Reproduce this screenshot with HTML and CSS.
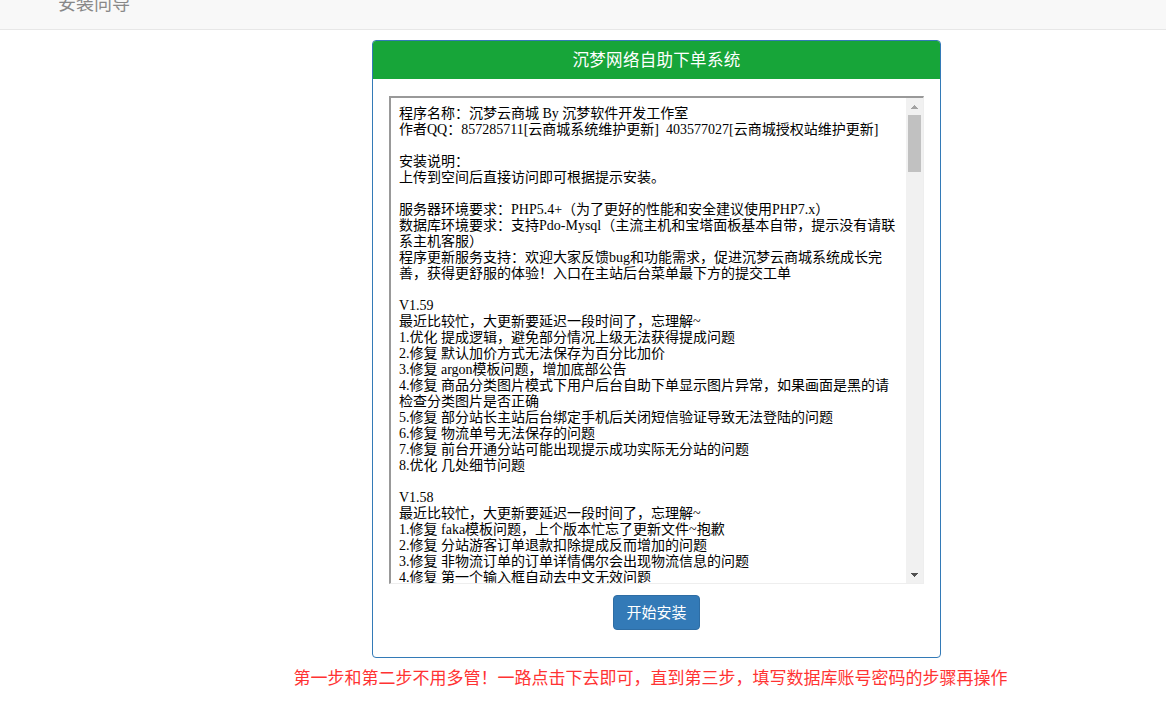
FILE: index.html
```html
<!DOCTYPE html>
<html lang="zh-CN">
<head>
<meta charset="utf-8">
<title>安装向导</title>
<link rel="stylesheet" href="styles.css">
</head>
<body>
<nav class="navbar"><span class="brand">安装向导</span></nav>
<main class="main">
  <section class="panel">
    <header class="panel-heading">沉梦网络自助下单系统</header>
    <div class="panel-body">
      <div class="textbox">
<textarea class="notes" wrap="off" readonly>程序名称：沉梦云商城 By 沉梦软件开发工作室
作者QQ：857285711[云商城系统维护更新]  403577027[云商城授权站维护更新]

安装说明：
上传到空间后直接访问即可根据提示安装。

服务器环境要求：PHP5.4+（为了更好的性能和安全建议使用PHP7.x）
数据库环境要求：支持Pdo-Mysql（主流主机和宝塔面板基本自带，提示没有请联
系主机客服）
程序更新服务支持：欢迎大家反馈bug和功能需求，促进沉梦云商城系统成长完
善，获得更舒服的体验！入口在主站后台菜单最下方的提交工单

V1.59
最近比较忙，大更新要延迟一段时间了，忘理解~
1.优化 提成逻辑，避免部分情况上级无法获得提成问题
2.修复 默认加价方式无法保存为百分比加价
3.修复 argon模板问题，增加底部公告
4.修复 商品分类图片模式下用户后台自助下单显示图片异常，如果画面是黑的请
检查分类图片是否正确
5.修复 部分站长主站后台绑定手机后关闭短信验证导致无法登陆的问题
6.修复 物流单号无法保存的问题
7.修复 前台开通分站可能出现提示成功实际无分站的问题
8.优化 几处细节问题

V1.58
最近比较忙，大更新要延迟一段时间了，忘理解~
1.修复 faka模板问题，上个版本忙忘了更新文件~抱歉
2.修复 分站游客订单退款扣除提成反而增加的问题
3.修复 非物流订单的订单详情偶尔会出现物流信息的问题
4.修复 第一个输入框自动去中文无效问题
5.优化 后台订单列表加载速度
6.优化 几处细节问题

V1.57
1.新增 支付接口配置页面，支持多种支付方式切换
2.修复 分站提现记录显示异常的问题
3.修复 商品批量上架部分商品失败的问题
4.修复 用户中心余额明细分页错误的问题
5.优化 后台订单列表加载速度
6.优化 若干界面显示细节

V1.56
1.新增 商品库存预警功能
2.新增 后台操作日志记录
3.修复 部分模板手机端显示错位的问题
4.修复 卡密商品发货偶尔重复的问题
5.修复 分站域名绑定后无法访问的问题
6.优化 对接货源的稳定性
7.优化 几处细节问题

V1.55
1.新增 工单系统图片上传功能
2.修复 订单导出数据乱码的问题
3.修复 商品规格价格显示错误的问题
4.修复 优惠券无法正常使用的问题
5.优化 首页加载速度
6.优化 几处细节问题

V1.54
1.新增 分站自定义公告功能
2.新增 商品分类排序功能
3.修复 在线支付回调偶尔失败的问题
4.修复 用户注册验证码不显示的问题
5.修复 后台统计数据不准确的问题
6.优化 几处细节问题

V1.53
1.新增 邮件通知功能
2.修复 分站升级价格计算错误的问题
3.修复 商品搜索结果不准确的问题
4.修复 部分浏览器下单按钮无响应的问题
5.优化 数据库查询效率
6.优化 几处细节问题

V1.52
1.新增 批量修改商品价格功能
2.修复 订单状态无法同步的问题
3.修复 用户余额充值记录丢失的问题
4.修复 后台登录偶尔失效的问题
5.优化 模板兼容性
6.优化 几处细节问题

V1.51
1.新增 商品多规格支持
2.修复 分站提成结算延迟的问题
3.修复 商品图片上传失败的问题
4.修复 移动端菜单无法展开的问题
5.优化 安全性检测
6.优化 几处细节问题

V1.50
1.新增 全新后台界面
2.新增 数据统计图表
3.修复 多处已知问题
4.优化 系统整体性能
5.优化 几处细节问题
</textarea>
        <div class="scrollbar" aria-hidden="true">
          <span class="sb-btn sb-up"></span>
          <span class="sb-track"><span class="sb-thumb"></span></span>
          <span class="sb-btn sb-down"></span>
        </div>
      </div>
      <div class="actions">
        <button type="button" class="btn">开始安装</button>
      </div>
    </div>
  </section>
  <p class="tip">第一步和第二步不用多管！一路点击下去即可，直到第三步，填写数据库账号密码的步骤再操作</p>
</main>
</body>
</html>
```

FILE: styles.css
```css
html, body {
  margin: 0;
  padding: 0;
  background: #fff;
}

body {
  font-family: "Liberation Sans", "Noto Sans CJK SC", sans-serif;
  font-size: 14px;
  color: #333;
  overflow: hidden;
}

.navbar {
  height: 29px;
  background: #f8f8f8;
  border-bottom: 1px solid #e7e7e7;
  overflow: hidden;
}

.brand {
  display: block;
  margin-top: -6px;
  padding-left: 58px;
  font-size: 18px;
  line-height: 20px;
  color: #888;
}

.main {
  padding-top: 10px;
}

.panel {
  box-sizing: border-box;
  width: 569px;
  margin-left: 372px;
  border: 1px solid #337ab7;
  border-radius: 4px;
  background: #fff;
  overflow: hidden;
}

.panel-heading {
  height: 38px;
  line-height: 38px;
  background: #17a539;
  color: #fff;
  font-size: 16.5px;
  text-align: center;
  letter-spacing: 0.3px;
}

.panel-body {
  padding: 17px 16px 27px 16px;
}

.textbox {
  display: flex;
  box-sizing: border-box;
  width: 535px;
  height: 488px;
  border-style: solid;
  border-width: 2px 1px 1px 2px;
  border-color: #999 #eee #eee #999;
  background: #fff;
}

.notes {
  display: block;
  flex: 1;
  min-width: 0;
  box-sizing: border-box;
  height: 100%;
  margin: 0;
  padding: 8px 8px 6px 8px;
  border: 0;
  font-family: "Liberation Serif", "Noto Sans CJK SC", serif;
  font-size: 14px;
  line-height: 16px;
  color: #000;
  background: #fff;
  resize: none;
  white-space: pre;
  overflow: hidden;
  outline: none;
}

.scrollbar {
  display: flex;
  flex-direction: column;
  width: 17px;
  flex: none;
  background: #f1f1f1;
}

.sb-btn {
  display: block;
  height: 17px;
  flex: none;
  background-repeat: no-repeat;
  background-position: center;
  background-size: 7px 4px;
}

.sb-up {
  background-image: conic-gradient(from 139deg at 50% 0, #a3a3a3 0 82deg, transparent 82deg);
}

.sb-down {
  background-image: conic-gradient(from -41deg at 50% 100%, #505050 0 82deg, transparent 82deg);
}

.sb-track {
  display: block;
  flex: 1;
  padding: 0 2px;
}

.sb-thumb {
  display: block;
  height: 57px;
  background: #c1c1c1;
}

.actions {
  display: flex;
  justify-content: center;
  padding-top: 11px;
}

.btn {
  box-sizing: border-box;
  height: 35px;
  padding: 0 12px;
  border: 1px solid #2e6da4;
  border-radius: 4px;
  background: #337ab7;
  color: #fff;
  font-family: "Liberation Sans", "Noto Sans CJK SC", sans-serif;
  font-size: 15px;
  line-height: 33px;
  cursor: pointer;
}

.tip {
  display: flex;
  justify-content: center;
  margin: 9px 0 0 0;
  padding-left: 135px;
  white-space: nowrap;
  font-size: 17px;
  line-height: 24px;
  color: #f33;
}
```
